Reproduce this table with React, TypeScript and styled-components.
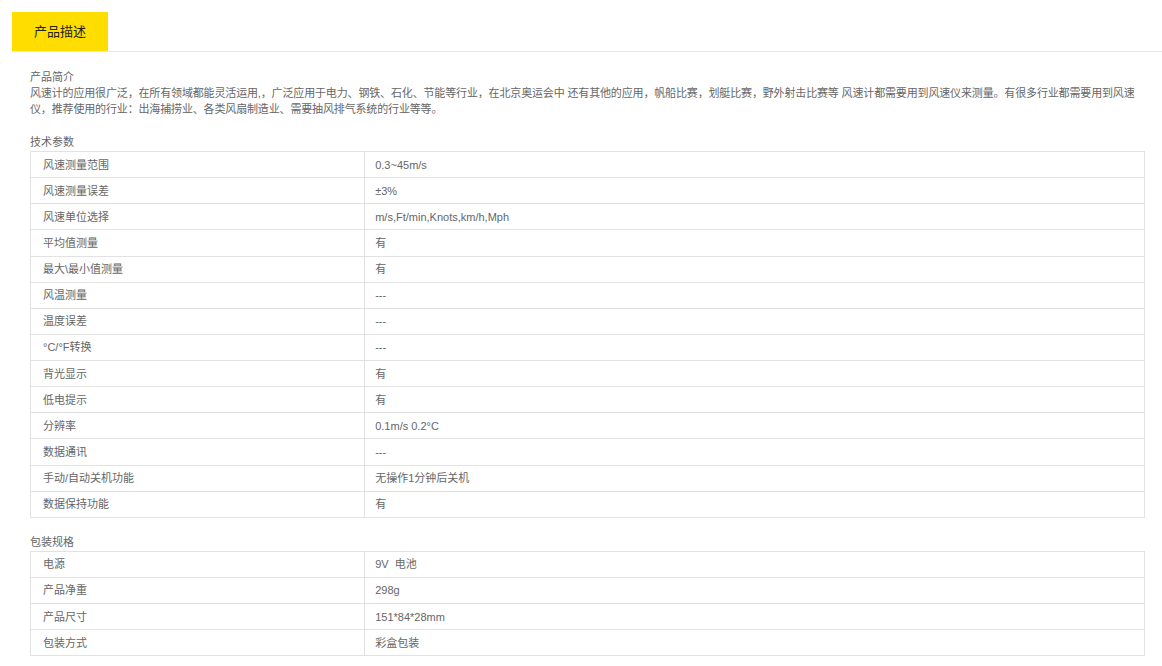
import React from "react";
import styled, { createGlobalStyle } from "styled-components";

const GlobalStyle = createGlobalStyle`
  html, body { margin: 0; padding: 0; background: #fff; }
  body {
    font-family: "Liberation Sans", Arial, "Noto Sans CJK SC", sans-serif;
    font-size: 11px;
    color: #666;
  }
`;

const Page = styled.div`
  padding: 12px 0 0 12px;
`;

const TabBar = styled.div`
  display: flex;
  border-bottom: 1px solid #e8e8e8;
  height: 39px;
`;

const Tab = styled.div`
  width: 96px;
  height: 39px;
  background: #ffdd00;
  color: #222;
  font-size: 13px;
  font-family: "Liberation Sans", "Noto Sans CJK SC", sans-serif;
  display: flex;
  align-items: center;
  justify-content: center;
  margin-bottom: -1px;
  padding-bottom: 2px;
  box-sizing: border-box;
`;

const Content = styled.div`
  padding: 17px 17px 0 18px;
`;

const SectionTitle = styled.div`
  line-height: 16px;
  font-size: 11px;
  color: #666;
  font-family: "Liberation Sans", "Noto Sans CJK SC", sans-serif;
`;

const Paragraph = styled.p`
  margin: 0 0 17px;
  line-height: 16px;
  font-size: 11px;
  letter-spacing: -0.15px;
  color: #666;
  font-family: "Liberation Sans", "Noto Sans CJK SC", sans-serif;
`;

const Table = styled.table`
  width: 100%;
  border-collapse: collapse;
  margin: 1px 0 16px;
  table-layout: fixed;
`;

const KeyCol = styled.col`
  width: 30%;
`;

const ValueCol = styled.col`
  width: 70%;
`;

const Cell = styled.td<{ $first?: boolean }>`
  border: 1px solid #e2e2e2;
  height: 25.14px;
  padding: 0 0 0 ${(p) => (p.$first ? "12px" : "10px")};
  font-size: 11px;
  color: #666;
  font-family: "Liberation Sans", "Noto Sans CJK SC", sans-serif;
  vertical-align: middle;
  line-height: 16px;
  white-space: pre;
`;

type Row = [string, string];

const techRows: Row[] = [
  ["风速测量范围", "0.3~45m/s"],
  ["风速测量误差", "±3%"],
  ["风速单位选择", "m/s,Ft/min,Knots,km/h,Mph"],
  ["平均值测量", "有"],
  ["最大\\最小值测量", "有"],
  ["风温测量", "---"],
  ["温度误差", "---"],
  ["°C/°F转换", "---"],
  ["背光显示", "有"],
  ["低电提示", "有"],
  ["分辨率", "0.1m/s 0.2°C"],
  ["数据通讯", "---"],
  ["手动/自动关机功能", "无操作1分钟后关机"],
  ["数据保持功能", "有"],
];

const packRows: Row[] = [
  ["电源", "9V  电池"],
  ["产品净重", "298g"],
  ["产品尺寸", "151*84*28mm"],
  ["包装方式", "彩盒包装"],
];

const SpecTable = ({ rows }: { rows: Row[] }) => (
  <Table>
    <colgroup>
      <KeyCol />
      <ValueCol />
    </colgroup>
    <tbody>
      {rows.map(([k, v]) => (
        <tr key={k}>
          <Cell $first>{k}</Cell>
          <Cell>{v}</Cell>
        </tr>
      ))}
    </tbody>
  </Table>
);

export default function App() {
  return (
    <>
      <GlobalStyle />
      <Page>
        <TabBar>
          <Tab>产品描述</Tab>
        </TabBar>
        <Content>
          <SectionTitle>产品简介</SectionTitle>
          <Paragraph>
            风速计的应用很广泛，在所有领域都能灵活运用,，广泛应用于电力、钢铁、石化、节能等行业，在北京奥运会中 还有其他的应用，帆船比赛，划艇比赛，野外射击比赛等 风速计都需要用到风速仪来测量。有很多行业都需要用到风速仪，推荐使用的行业：出海捕捞业、各类风扇制造业、需要抽风排气系统的行业等等。
          </Paragraph>
          <SectionTitle>技术参数</SectionTitle>
          <SpecTable rows={techRows} />
          <SectionTitle>包装规格</SectionTitle>
          <SpecTable rows={packRows} />
        </Content>
      </Page>
    </>
  );
}
